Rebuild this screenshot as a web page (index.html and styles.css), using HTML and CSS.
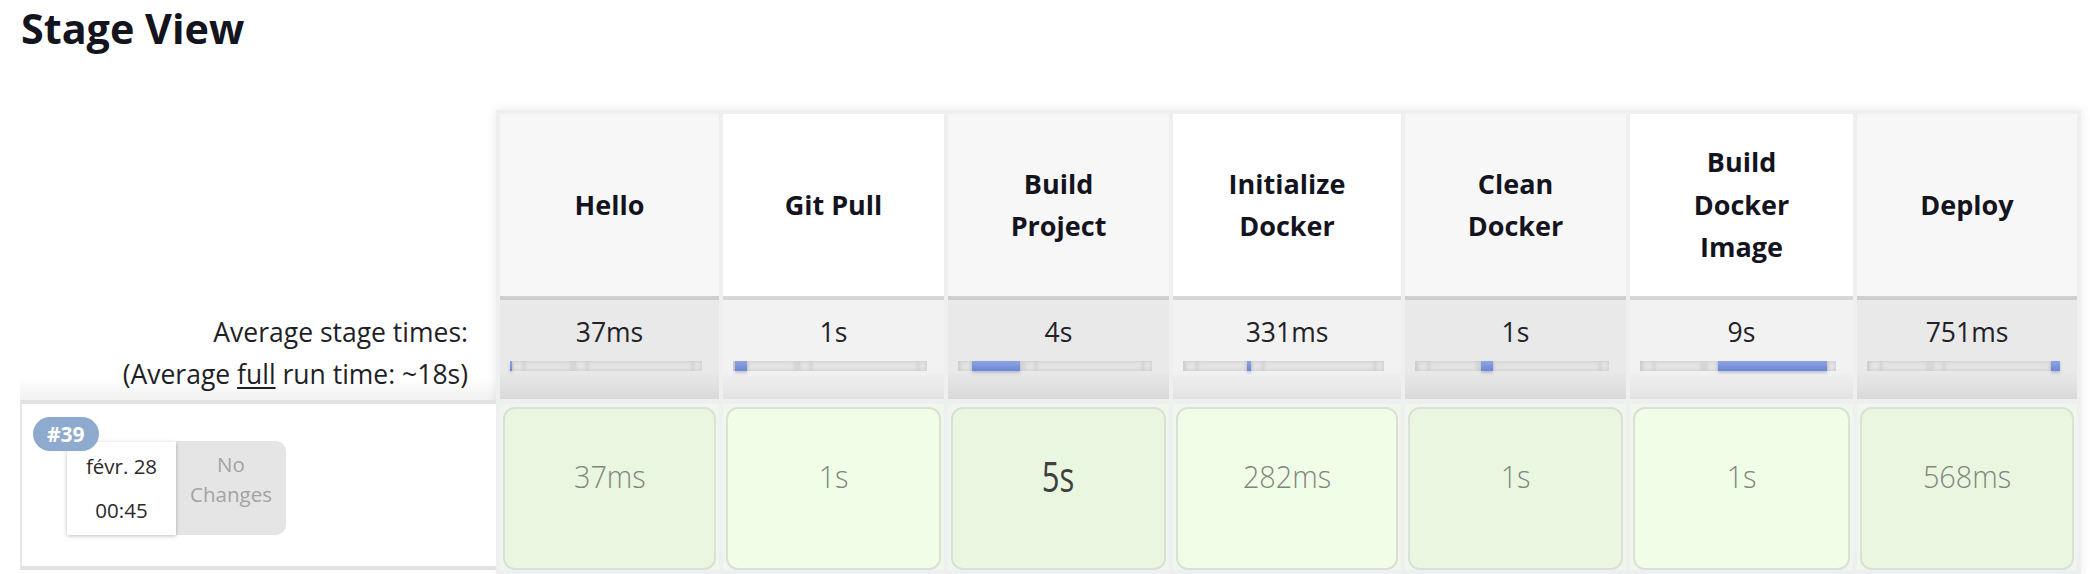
FILE: index.html
```html
<!DOCTYPE html>
<html lang="fr">
<head>
<meta charset="utf-8">
<title>Stage View</title>
<link rel="stylesheet" href="styles.css">
</head>
<body>
<h2 class="title">Stage View</h2>
<div class="stage-view">
  <div class="labels">
    <div class="labels-spacer"></div>
    <div class="avg-label">
      <div>Average stage times:</div>
      <div>(Average <u class="full">full</u> run time: ~18s)</div>
    </div>
    <div class="build-info">
      <span class="badge">#39</span>
      <div class="build-meta">
        <div class="date-box"><div>févr. 28</div><div>00:45</div></div>
        <div class="changes">No<br>Changes</div>
      </div>
    </div>
  </div>
  <div class="table">
    <div class="head odd"><span>Hello</span></div>
    <div class="head even"><span>Git Pull</span></div>
    <div class="head odd"><span>Build Project</span></div>
    <div class="head even"><span>Initialize Docker</span></div>
    <div class="head odd"><span>Clean Docker</span></div>
    <div class="head even"><span>Build Docker Image</span></div>
    <div class="head odd"><span>Deploy</span></div>

    <div class="avg odd"><div class="avg-time">37ms</div>
      <div class="bar"><i class="seg s1 on"></i><i class="seg s2"></i><i class="seg s3"></i><i class="seg s4"></i><i class="seg s5"></i><i class="seg s6"></i><i class="seg s7"></i></div></div>
    <div class="avg even"><div class="avg-time">1s</div>
      <div class="bar"><i class="seg s1"></i><i class="seg s2 on"></i><i class="seg s3"></i><i class="seg s4"></i><i class="seg s5"></i><i class="seg s6"></i><i class="seg s7"></i></div></div>
    <div class="avg odd"><div class="avg-time">4s</div>
      <div class="bar"><i class="seg s1"></i><i class="seg s2"></i><i class="seg s3 on"></i><i class="seg s4"></i><i class="seg s5"></i><i class="seg s6"></i><i class="seg s7"></i></div></div>
    <div class="avg even"><div class="avg-time">331ms</div>
      <div class="bar"><i class="seg s1"></i><i class="seg s2"></i><i class="seg s3"></i><i class="seg s4 on"></i><i class="seg s5"></i><i class="seg s6"></i><i class="seg s7"></i></div></div>
    <div class="avg odd"><div class="avg-time">1s</div>
      <div class="bar"><i class="seg s1"></i><i class="seg s2"></i><i class="seg s3"></i><i class="seg s4"></i><i class="seg s5 on"></i><i class="seg s6"></i><i class="seg s7"></i></div></div>
    <div class="avg even"><div class="avg-time">9s</div>
      <div class="bar"><i class="seg s1"></i><i class="seg s2"></i><i class="seg s3"></i><i class="seg s4"></i><i class="seg s5"></i><i class="seg s6 on"></i><i class="seg s7"></i></div></div>
    <div class="avg odd"><div class="avg-time">751ms</div>
      <div class="bar"><i class="seg s1"></i><i class="seg s2"></i><i class="seg s3"></i><i class="seg s4"></i><i class="seg s5"></i><i class="seg s6"></i><i class="seg s7 on"></i></div></div>

    <div class="cell odd"><div class="box"><span class="dur">37ms</span></div></div>
    <div class="cell even"><div class="box"><span class="dur">1s</span></div></div>
    <div class="cell odd"><div class="box"><span class="dur big">5s</span></div></div>
    <div class="cell even"><div class="box"><span class="dur">282ms</span></div></div>
    <div class="cell odd"><div class="box"><span class="dur">1s</span></div></div>
    <div class="cell even"><div class="box"><span class="dur">1s</span></div></div>
    <div class="cell odd"><div class="box"><span class="dur">568ms</span></div></div>
  </div>
</div>
</body>
</html>
```
FILE: styles.css
```css
html, body {
  margin: 0;
  padding: 0;
  overflow: hidden;
  background: #ffffff;
}
body {
  font-family: "Open Sans", "Noto Sans", sans-serif;
  color: #1b1b27;
  font-size: 26.5px;
}
.title {
  margin: 1px 0 0 21px;
  font-size: 41.3px;
  line-height: 55px;
  font-weight: 700;
  color: #14141f;
}
.stage-view {
  display: flex;
  align-items: flex-start;
  margin: 54px 0 0 20px;
}
.labels {
  width: 476px;
  display: flex;
  flex-direction: column;
}
.labels-spacer {
  height: 190px;
}
.avg-label {
  height: 89px;
  padding: 11px 28px 0 0;
  text-align: right;
  line-height: 42px;
  color: #1f1f28;
  background: linear-gradient(to bottom, #ffffff 78%, #f1f1f1 100%);
}
.full {
  text-decoration-thickness: 2px;
  text-underline-offset: 3px;
}
.build-info {
  position: relative;
  height: 162px;
  border-top: 4px solid #e2e2e2;
  border-left: 2px solid #e6e6e6;
  border-bottom: 4px solid #e2e2e2;
  background: #ffffff;
}
.badge {
  position: absolute;
  left: 11px;
  top: 13px;
  z-index: 2;
  height: 34px;
  padding: 0 14px;
  border-radius: 17px;
  background: #8eaacf;
  color: #ffffff;
  font-weight: 700;
  font-size: 21px;
  line-height: 34px;
}
.build-meta {
  display: flex;
  margin: 38px 0 0 45px;
}
.date-box {
  position: relative;
  z-index: 1;
  width: 109px;
  height: 91px;
  padding-top: 2px;
  background: #ffffff;
  box-shadow: 0 1px 4px rgba(0, 0, 0, 0.25);
  text-align: center;
  font-size: 20.5px;
  line-height: 44px;
  color: #2a2a2a;
}
.changes {
  width: 110px;
  height: 86px;
  padding-top: 8px;
  margin-top: -1px;
  background: #e5e5e5;
  border-radius: 0 10px 10px 0;
  text-align: center;
  font-size: 20.5px;
  line-height: 30px;
  color: #a3a3a3;
}
.table {
  display: grid;
  grid-template-columns: 219px 221px 221px 228px 221px 223px 220px;
  column-gap: 4px;
  padding: 4px;
  background: #eeeff1;
  box-shadow: 0 0 10px rgba(0, 0, 0, 0.09);
}
.head {
  height: 182px;
  display: flex;
  align-items: center;
  justify-content: center;
  text-align: center;
  font-weight: 700;
  font-size: 27px;
  line-height: 42.5px;
  color: #14141f;
}
.head span {
  max-width: 150px;
}
.head.odd { background: #f7f7f7; }
.head.even { background: #ffffff; }
.avg {
  height: 88px;
  padding-top: 11px;
  border-top: 4px solid rgba(0, 0, 0, 0.055);
  text-align: center;
  line-height: 42px;
  color: #222228;
}
.avg.odd {
  background: linear-gradient(to bottom, rgba(0, 0, 0, 0) 72%, rgba(0, 0, 0, 0.065) 100%), #e9e9e9;
}
.avg.even {
  background: linear-gradient(to bottom, rgba(0, 0, 0, 0) 72%, rgba(0, 0, 0, 0.065) 100%), #f2f2f2;
}
.bar {
  display: flex;
  height: 10px;
  margin: 8px 17px 0 10px;
  background: #e0e0e0;
}
.seg {
  display: block;
  flex: 0 0 0;
  min-width: 2px;
  height: 10px;
  background: #e4e4e4;
  box-shadow: inset 0 0 4px rgba(0, 0, 0, 0.13);
}
.seg.on {
  position: relative;
  background: linear-gradient(to bottom, #8ea3e2, #6d87d4);
  box-shadow: 0 2px 3px rgba(40, 60, 120, 0.25);
}
.s1 { flex-grow: 37; }
.s2 { flex-grow: 1000; }
.s3 { flex-grow: 4000; }
.s4 { flex-grow: 331; }
.s5 { flex-grow: 1000; }
.s6 { flex-grow: 9000; }
.s7 { flex-grow: 751; }
.cell {
  margin-top: 5px;
  padding: 3px 3px 0;
  background: #eff6ea;
}
.box {
  height: 115px;
  padding-top: 44px;
  border: 2px solid #dcdfd8;
  border-radius: 12px;
  text-align: center;
  line-height: 46px;
}
.cell.odd .box { background: #eaf7e0; }
.cell.even .box { background: #f1fee7; }
.dur {
  display: inline-block;
  font-size: 32px;
  font-weight: 300;
  color: #80867e;
  transform: scaleX(0.9);
}
.dur.big {
  font-size: 42px;
  font-weight: 400;
  color: #3f3f3f;
  transform: scaleX(0.74);
}
```
